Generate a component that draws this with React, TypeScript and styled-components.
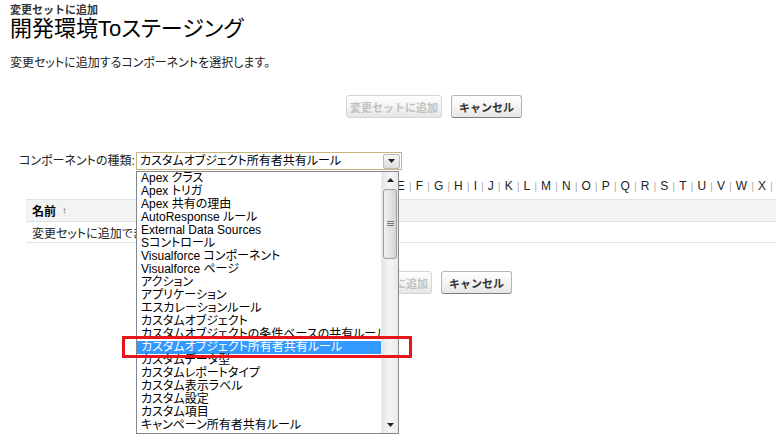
import React from "react";
import styled, { createGlobalStyle } from "styled-components";

const Global = createGlobalStyle`
  html, body { margin: 0; padding: 0; background: #fff; }
  body {
    font-family: "Liberation Sans", Arial, "Noto Sans CJK JP", sans-serif;
    font-feature-settings: "palt";
    color: #222;
  }
`;

const Page = styled.div`
  position: relative;
  width: 776px;
  height: 440px;
  overflow: hidden;
  background: #fff;
`;

const Header = styled.div`
  padding: 4px 0 0 10px;
`;

const SubTitle = styled.div`
  font-size: 11px;
  font-weight: bold;
  line-height: 12px;
  color: #333;
  font-feature-settings: normal;
`;

const Title = styled.h1`
  margin: 1px 0 0;
  font-size: 22px;
  font-weight: normal;
  line-height: 24px;
  color: #000;
`;

const Desc = styled.p`
  margin: 15px 0 0;
  padding-left: 10px;
  font-size: 12px;
  line-height: 14px;
  color: #222;
`;

const ButtonRow = styled.div<{ $top: number; $left: number }>`
  display: flex;
  gap: 9px;
  margin-top: ${(p) => p.$top}px;
  padding-left: ${(p) => p.$left}px;
`;

const Btn = styled.button<{ $disabled?: boolean }>`
  height: 23px;
  padding: 0 7px;
  border: 1px solid #b5b5b5;
  border-bottom-color: #7f7f7f;
  border-radius: 3px;
  background: linear-gradient(#fff, #f4f4f4 50%, #e6e6e6);
  font-family: "Liberation Sans", Arial, "Noto Sans CJK JP", sans-serif;
  font-feature-settings: normal;
  font-size: 11px;
  font-weight: bold;
  color: ${(p) => (p.$disabled ? "#c1c1c1" : "#333")};
  ${(p) => (p.$disabled ? "border-color: #d4d4d4; padding: 0 3px;" : "")}
`;

const SelectRow = styled.div`
  display: flex;
  align-items: center;
  margin-top: 34px;
  padding-left: 19px;
  height: 18px;
`;

const Label = styled.span`
  width: 117px;
  font-size: 12px;
  line-height: 14px;
  color: #222;
`;

const SelectBox = styled.div`
  position: relative;
  display: flex;
  align-items: center;
  width: 261px;
  height: 16px;
  border: 1px solid #c9b47c;
  background: #fff;
  font-size: 12px;
  line-height: 14px;
  padding-left: 3px;
  box-sizing: content-box;
`;

const SelectText = styled.span`
  flex: 1;
  color: #000;
`;

const ArrowBtn = styled.div`
  display: flex;
  align-items: center;
  justify-content: center;
  width: 15px;
  height: 13px;
  margin-right: 1px;
  border: 1px solid #b9b9b9;
  border-radius: 2px;
  background: linear-gradient(#f7f7f7, #dcdcdc);
`;

const Rolodex = styled.div`
  display: flex;
  margin-top: 9px;
  padding-left: 320px;
  font-size: 12px;
  line-height: 14px;
  white-space: nowrap;
`;

const Letter = styled.span`
  color: #222;
`;

const Sep = styled.span`
  color: #b0b0b0;
  margin: 0 4px;
  font-size: 11px;
`;

const Table = styled.div`
  margin: 6px 0 0 26px;
  width: 780px;
`;

const HeadRow = styled.div`
  display: flex;
  align-items: center;
  height: 21px;
  padding-left: 6px;
  border-top: 1px solid #e0e3e5;
  border-bottom: 1px solid #e0e3e5;
  background: #f2f3f3;
  font-size: 12px;
  font-weight: bold;
  color: #000;
`;

const SortArrow = styled.span`
  margin-left: 6px;
  font-size: 10px;
  font-weight: normal;
  color: #555;
`;

const BodyRow = styled.div`
  display: flex;
  align-items: center;
  height: 20px;
  padding-left: 6px;
  border-bottom: 1px solid #e3e3e3;
  font-size: 12px;
  color: #222;
`;

const Dropdown = styled.div`
  position: absolute;
  left: 136px;
  top: 171px;
  width: 261px;
  height: 261px;
  display: flex;
  border: 1px solid #828790;
  background: #fff;
`;

const List = styled.ul`
  flex: 1;
  margin: 0;
  padding: 0;
  list-style: none;
  overflow: hidden;
`;

const Item = styled.li<{ $selected?: boolean }>`
  height: 13px;
  padding-left: 4px;
  font-size: 12px;
  line-height: 13px;
  white-space: nowrap;
  color: ${(p) => (p.$selected ? "#fff" : "#000")};
  background: ${(p) => (p.$selected ? "#3399ff" : "transparent")};
`;

const ScrollBar = styled.div`
  display: flex;
  flex-direction: column;
  width: 16px;
  background: linear-gradient(90deg, #e6e6e6, #f5f5f5 50%, #e9e9e9);
  border-left: 1px solid #ececec;
`;

const ScrollArrow = styled.div`
  display: flex;
  align-items: center;
  justify-content: center;
  height: 16px;
`;

const Thumb = styled.div`
  margin: 1px 1px 0;
  height: 68px;
  display: flex;
  align-items: center;
  justify-content: center;
  border: 1px solid #9c9c9c;
  border-radius: 3px;
  background: linear-gradient(90deg, #f2f2f2, #e0e0e0 60%, #d4d4d4);
`;

const Track = styled.div`
  flex: 1;
`;

const Highlight = styled.div`
  position: absolute;
  left: 122px;
  top: 336px;
  width: 284px;
  height: 16px;
  border: 3px solid #e8141b;
`;

const items = [
  "Apex クラス",
  "Apex トリガ",
  "Apex 共有の理由",
  "AutoResponse ルール",
  "External Data Sources",
  "Sコントロール",
  "Visualforce コンポーネント",
  "Visualforce ページ",
  "アクション",
  "アプリケーション",
  "エスカレーションルール",
  "カスタムオブジェクト",
  "カスタムオブジェクトの条件ベースの共有ルール",
  "カスタムオブジェクト所有者共有ルール",
  "カスタムデータ型",
  "カスタムレポートタイプ",
  "カスタム表示ラベル",
  "カスタム設定",
  "カスタム項目",
  "キャンペーン所有者共有ルール",
];

const letters = "ABCDEFGHIJKLMNOPQRSTUVWXYZ".split("").concat(["その他", "すべて"]);

const Tri = ({ up }: { up?: boolean }) => (
  <svg width="7" height="4" viewBox="0 0 7 4">
    <path d={up ? "M0 4 L3.5 0 L7 4 Z" : "M0 0 L7 0 L3.5 4 Z"} fill="#222" />
  </svg>
);

const Grip = () => (
  <svg width="7" height="6" viewBox="0 0 7 6">
    <path d="M0 0.5 H7 M0 2.5 H7 M0 4.5 H7" stroke="#7a7a7a" strokeWidth="1" />
  </svg>
);

export default function App() {
  return (
    <>
      <Global />
      <Page>
        <Header>
          <SubTitle>変更セットに追加</SubTitle>
          <Title>開発環境Toステージング</Title>
        </Header>
        <Desc>変更セットに追加するコンポーネントを選択します。</Desc>
        <ButtonRow $top={25} $left={346}>
          <Btn $disabled>変更セットに追加</Btn>
          <Btn>キャンセル</Btn>
        </ButtonRow>
        <SelectRow>
          <Label>コンポーネントの種類:</Label>
          <SelectBox>
            <SelectText>カスタムオブジェクト所有者共有ルール</SelectText>
            <ArrowBtn>
              <Tri />
            </ArrowBtn>
          </SelectBox>
        </SelectRow>
        <Rolodex>
          {letters.map((l, i) => (
            <React.Fragment key={l}>
              {i > 0 && <Sep>|</Sep>}
              <Letter>{l}</Letter>
            </React.Fragment>
          ))}
        </Rolodex>
        <Table>
          <HeadRow>
            名前<SortArrow>↑</SortArrow>
          </HeadRow>
          <BodyRow>変更セットに追加できるコンポーネントはありません。</BodyRow>
        </Table>
        <ButtonRow $top={28} $left={336}>
          <Btn $disabled>変更セットに追加</Btn>
          <Btn>キャンセル</Btn>
        </ButtonRow>
        <Dropdown>
          <List>
            {items.map((it) => (
              <Item key={it} $selected={it === "カスタムオブジェクト所有者共有ルール"}>
                {it}
              </Item>
            ))}
          </List>
          <ScrollBar>
            <ScrollArrow>
              <Tri up />
            </ScrollArrow>
            <Thumb>
              <Grip />
            </Thumb>
            <Track />
            <ScrollArrow>
              <Tri />
            </ScrollArrow>
          </ScrollBar>
        </Dropdown>
        <Highlight />
      </Page>
    </>
  );
}
